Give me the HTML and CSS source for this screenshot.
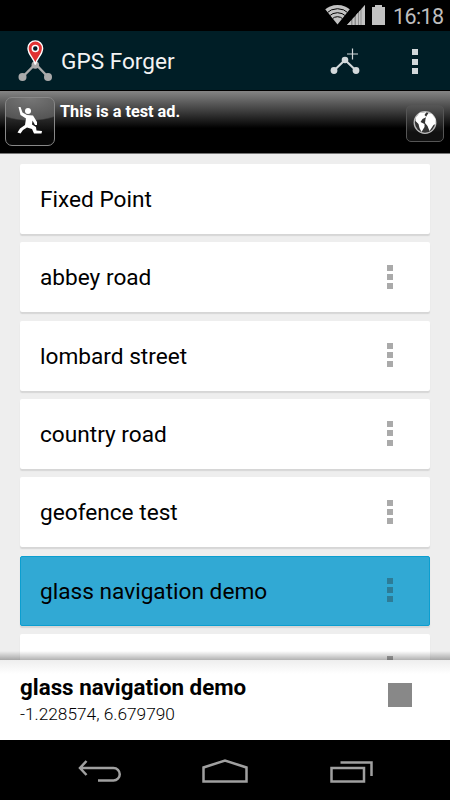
FILE: index.html
```html
<!DOCTYPE html>
<html lang="en">
<head>
<meta charset="utf-8">
<title>GPS Forger</title>
<link rel="stylesheet" href="styles.css">
</head>
<body>
<div class="phone">
  <div class="status">
    <svg class="status-icons" width="62" height="31" viewBox="0 0 62 31">
      <defs><clipPath id="fan"><path d="M12.5 24.5L0 9Q12-1 25 9Z"/></clipPath></defs>
      <g clip-path="url(#fan)"><circle cx="12.5" cy="24.5" r="19.5" fill="#c2c2c2"/><g fill="none" stroke="#000" stroke-width="1"><circle cx="12.5" cy="24.5" r="15.8"/><circle cx="12.5" cy="24.5" r="11.8"/><circle cx="12.5" cy="24.5" r="7.8"/></g></g>
      <path d="M22 25L40 5V25Z" fill="#8c8c8c"/>
      <path d="M22 25l4-4.4V25zM27.5 25v-6l2-2.2V25zM31 25V15l2-2.2V25zM34 25V11.7l1.5-1.7v15zM36.5 25V9L40 5v20z" fill="#c2c2c2"/>
      <path d="M47 7h3V5h7v2h3v18H47z" fill="#c2c2c2"/>
    </svg>
    <span class="clock">16:18</span>
  </div>
  <header class="bar">
    <svg width="36" height="44" viewBox="0 0 36 44">
      <path d="M4.5 37L17.5 24L30 37" fill="none" stroke="#aaa" stroke-width="2.4"/>
      <g fill="#aaa"><circle cx="4.5" cy="37" r="4"/><circle cx="30" cy="37" r="4"/><circle cx="17.3" cy="25" r="3.8"/></g>
      <path d="M17.3 24.5C16 18 10 15 10 8.2A7.3 7.3 0 0 1 24.6 8.2C24.6 15 18.6 18 17.3 24.5Z" fill="#e03232" stroke="#fff" stroke-width="1.4"/>
      <circle cx="17.3" cy="8.5" r="3" fill="#001e26" stroke="#fff" stroke-width="1.5"/>
    </svg>
    <h1>GPS Forger</h1>
    <svg class="add" width="32" height="32" viewBox="0 0 32 32" fill="none" stroke="#d2d8da">
      <path d="M4 24.5L15 14L26 24.5" stroke-width="2"/>
      <path d="M22.5 2.5V13.5M17 8H28" stroke-width="1.2"/>
      <g fill="#d2d8da" stroke="none"><circle cx="4" cy="24.5" r="3.4"/><circle cx="15" cy="14" r="3.3"/><circle cx="26" cy="24.5" r="3.4"/></g>
    </svg>
    <span class="dots light"><i></i><i></i><i></i></span>
  </header>
  <section class="ad">
    <span class="ad-icon"><svg width="48" height="48" viewBox="0 0 48 48">
      <circle cx="22" cy="13" r="3" fill="#fff"/>
      <path d="M12.500 9L14.500 9L16.500 14.500L21 17L27 17.500L31 24L31 27L29 27L26.500 22.500L26 26.500L30 29L30.500 32.500L36 33L35.500 35.500L28 35.500L26 31L21 29.500L17 32L14.500 35.500L11.500 34.500L14 30.500L19 27L20 20.500L14.500 17Z" fill="#fff"/>
    </svg></span>
    <p>This is a test ad.</p>
    <span class="ad-globe"><svg width="36" height="35" viewBox="0 0 36 35">
      <circle cx="18" cy="16.500" r="10.800" fill="#333" stroke="#bbb" stroke-width="1.300"/>
      <path d="M8.500 12L12.500 7L19.500 6L17.500 9L19.500 11L15.500 13L13.500 16L17.500 18L17.500 21L14.500 26L12.500 22L11.500 18L8.500 15ZM19.500 10L21.500 7L25 8L28.500 13V18L26.500 19L24.500 22L22.500 25L20.500 20L18 17L18.500 13Z" fill="#fff"/>
    </svg></span>
  </section>
  <main class="list">
    <div class="card"><span>Fixed Point</span></div>
    <div class="card"><span>abbey road</span><span class="dots"><i></i><i></i><i></i></span></div>
    <div class="card"><span>lombard street</span><span class="dots"><i></i><i></i><i></i></span></div>
    <div class="card"><span>country road</span><span class="dots"><i></i><i></i><i></i></span></div>
    <div class="card"><span>geofence test</span><span class="dots"><i></i><i></i><i></i></span></div>
    <div class="card active"><span>glass navigation demo</span><span class="dots"><i></i><i></i><i></i></span></div>
    <div class="card"><svg width="120" height="18" viewBox="0 0 120 18" fill="#777"><path d="M56.500 1h2.500v2H56.500zM109.500 1h2.500v2H109.500z"/></svg><span class="dots"><i></i><i></i><i></i></span></div>
  </main>
  <section class="player">
    <div><h2>glass navigation demo</h2><p>-1.228574, 6.679790</p></div>
    <span class="stop"></span>
  </section>
  <nav class="nav">
    <svg width="44" height="26" viewBox="0 0 44 26"><path d="M9.500 1L3 8L9.500 15M3 8H36.500A6.250 6.250 0 0 1 36.500 20.500H21"/></svg>
    <svg width="48" height="26" viewBox="0 0 48 26"><path d="M2.500 21.500V7.500L24 0.500L45.500 7.500V21.500Z"/></svg>
    <svg width="46" height="26" viewBox="0 0 46 26"><path d="M2.500 8H35V21.500H2.500ZM11.500 2.500H42.500V16"/></svg>
  </nav>
</div>
</body>
</html>
```
FILE: styles.css
```css
* { box-sizing: border-box; margin: 0; }
body { font-family: Roboto, sans-serif; background: #eee; }
svg { display: block; flex: none; }
.phone { width: 450px; height: 800px; display: flex; flex-direction: column; overflow: hidden; }
.status { height: 31px; background: #000; display: flex; justify-content: flex-end; padding-right: 8px; }
.status-icons { margin-right: 6px; }
.clock { color: #bebebe; font-size: 21.5px; line-height: 33px; width: 49px; white-space: nowrap; letter-spacing: -.6px; }
.bar { height: 60px; background: #001e26; border-bottom: 1px solid #000; display: flex; align-items: center; padding-left: 18px; }
.bar svg:first-child { margin-top: 3px; }
.bar h1 { font-size: 22.6px; font-weight: 400; color: #f3f3f3; margin-left: 7px; line-height: 30px; padding-top: 3px; width: 269px; }
.bar .add { margin-top: 2px; }
.dots { display: flex; flex-direction: column; gap: 3.3px; width: 6px; flex: none; }
.dots i { width: 6px; height: 6px; background: #aaa; }
.dots.light { margin-left: 50px; margin-top: 2px; }
.light i { background: #d2d8da; }
.ad { height: 63px; display: flex; background: linear-gradient(#858585, #000 60%); border-bottom: 1px solid #777; padding: 6px 6px 0 5px; }
.ad-icon { width: 50px; height: 49px; border: 1px solid #888; border-radius: 7px; background: radial-gradient(ellipse 45px 23px at 50% 0, #777 0, #555 94%, transparent 100%), linear-gradient(#555, #080808 75%); }
.ad p { flex: 1; color: #fff; font-weight: 700; font-size: 16.3px; line-height: 20px; padding: 5px 0 0 5px; }
.ad-globe { width: 38px; height: 37px; margin-top: 8px; border: 1px solid #555; border-radius: 5px; background: linear-gradient(#555, #111 75%); }
.list { height: 506px; padding: 10px 20px 0; background: #eee; display: flex; flex-direction: column; gap: 8.33px; overflow: hidden; }
.card { height: 70px; flex: none; background: #fff; border-radius: 2px; box-shadow: 0 2px 1px #d6d6d6; display: flex; align-items: center; padding: 0 37px 0 20px; font-size: 22.65px; color: #000; }
.card span:first-child { padding-top: 1px; }
.card > svg { margin-top: -2px; }
.card .dots { margin-left: auto; margin-top: -1px; }
.active { background: #31a9d4; border: 1px solid #0b9ed0; padding: 0 36px 0 19px; }
.active i { background: #2d7c97; }
.player { height: 80px; flex: none; position: relative; display: flex; justify-content: space-between; background: linear-gradient(#eee, #fff 14px); padding: 14px 38px 0 20px; }
.player::before { content: ""; position: absolute; left: 0; right: 0; top: -9px; height: 9px; background: linear-gradient(transparent, rgba(0,0,0,.3)); }
.player h2 { font-size: 22.35px; line-height: 27px; font-weight: 700; }
.player p { font-size: 17.3px; line-height: 26px; font-weight: 300; }
.stop { width: 24px; height: 24px; margin-top: 9px; background: #888; }
.nav { height: 60px; background: #000; display: flex; padding: 20px 0 0 77px; }
.nav svg { fill: none; stroke: #a0a0a0; stroke-width: 2.5; overflow: visible; }
.nav svg + svg { margin-left: 80px; }
```
